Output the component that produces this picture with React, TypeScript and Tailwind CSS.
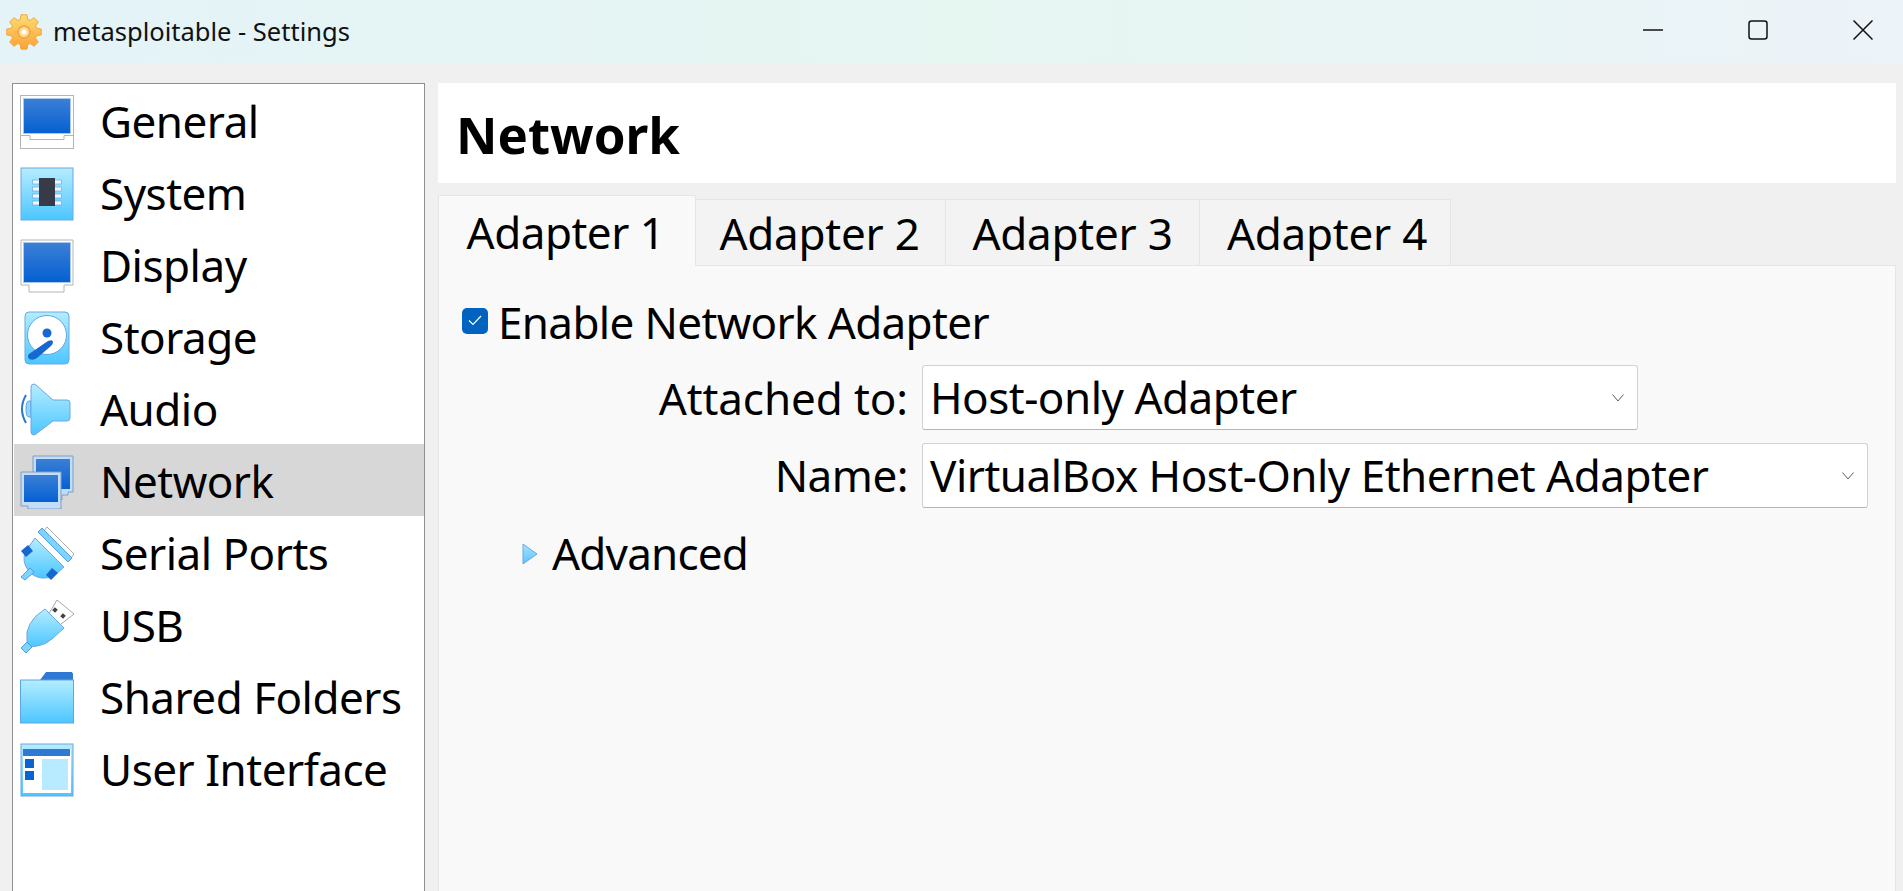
import type { ReactNode } from "react";

const FONT = "font-['Noto_Sans',sans-serif]";

// 8 tooth cog outline, centred on 18,18
function gearPath() {
  const pts: string[] = [];
  for (let i = 0; i < 8; i++) {
    const a = (i * Math.PI) / 4 - Math.PI / 2;
    const corners: [number, number][] = [
      [13, -0.3],
      [17.5, -0.17],
      [17.5, 0.17],
      [13, 0.3],
    ];
    for (const [r, d] of corners) {
      pts.push(`${(18 + r * Math.cos(a + d)).toFixed(2)} ${(18 + r * Math.sin(a + d)).toFixed(2)}`);
    }
  }
  return `M${pts.join("L")}Z`;
}

function Defs() {
  return (
    <svg width="0" height="0" className="absolute">
      <defs>
        <linearGradient id="lightBlue" x1="0" y1="0" x2="0" y2="1">
          <stop offset="0" stopColor="#b5edff" />
          <stop offset="1" stopColor="#4cc6ff" />
        </linearGradient>
        <linearGradient id="deepBlue" x1="0" y1="0" x2="0" y2="1">
          <stop offset="0" stopColor="#3c7fd6" />
          <stop offset="1" stopColor="#0460d2" />
        </linearGradient>
        <linearGradient id="gear" x1="0" y1="0" x2="0" y2="1">
          <stop offset="0" stopColor="#ffdc70" />
          <stop offset="1" stopColor="#fba236" />
        </linearGradient>
      </defs>
    </svg>
  );
}

function Icon({ children }: { children: ReactNode }) {
  return (
    <svg width="54" height="54" viewBox="0 0 54 54" className="shrink-0">
      {children}
    </svg>
  );
}

const GeneralIcon = () => (
  <Icon>
    <rect x="0.5" y="0.5" width="53" height="53" fill="#fff" stroke="#b4b4b4" />
    <rect x="3.5" y="3.5" width="47" height="35" fill="url(#deepBlue)" stroke="#a8c8ee" />
    <path d="M0 40.500h10v4h34v-4h10" fill="none" stroke="#b4b4b4" />
  </Icon>
);

const SystemIcon = () => (
  <Icon>
    <rect x="1" y="1" width="52" height="52" fill="url(#lightBlue)" stroke="#6da7e4" />
    {[13, 20, 27, 34].map((y) => (
      <rect key={y} x="12.5" y={y} width="29" height="4" fill="#eef8ff" stroke="#6da7e4" strokeWidth="0.7" />
    ))}
    <rect x="19" y="11" width="16" height="28" fill="#363b47" />
  </Icon>
);

const DisplayIcon = () => (
  <Icon>
    <path d="M1 1h52v45H44v7H9v-7H1z" fill="#fff" stroke="#b4b4b4" />
    <rect x="3.5" y="3.5" width="47" height="40" fill="url(#deepBlue)" stroke="#a8c8ee" />
  </Icon>
);

const StorageIcon = () => (
  <Icon>
    <rect x="5" y="1" width="44" height="52" rx="4" fill="url(#lightBlue)" stroke="#6da7e4" />
    <circle cx="27" cy="24" r="19.5" fill="#fff" stroke="#5aa7e8" />
    <circle cx="27" cy="22" r="4.5" fill="#1667cf" />
    <path d="M9 48q-2-3 0-5L28 30q5-2 5 1 0 2-2 4L17 47q-4 3-8 1z" fill="#1667cf" />
  </Icon>
);

const AudioIcon = () => (
  <Icon>
    <path d="M6 12q-8 14 0 28" fill="none" stroke="#2a78d6" strokeWidth="2" />
    <path d="M11 18h-2q-3 0-3 8t3 8h2z" fill="#8ed8ff" stroke="#5ea5e6" />
    <path d="M11 4q0-3 3-3l2 1 17 15h14q3 0 3 3v15q0 3-3 3H33L16 51l-2 1q-3 0-3-3z" fill="url(#lightBlue)" stroke="#6da7e4" />
  </Icon>
);

const NetworkIcon = () => (
  <Icon>
    <path d="M13 1h40v36h-5v3h-6v5H13z" fill="#c2ddf5" stroke="#7d9fc9" />
    <rect x="16" y="4" width="34" height="30" fill="url(#deepBlue)" />
    <path d="M1 17h40v37H8v-3H1z" fill="#c2ddf5" stroke="#7d9fc9" />
    <rect x="4" y="20" width="34" height="27" fill="url(#deepBlue)" />
  </Icon>
);

const SerialIcon = () => (
  <Icon>
    <path d="M27 0l27 27-3 4L24 4z" fill="#fff" stroke="#a8a8a8" />
    <path d="M22 1l30 30-4 4-30-30z" fill="#7fd3ff" stroke="#4f9be6" />
    <path d="M15 11l29 29-8 7q-6 5-14 4-9-1-14-8-6-8-3-18z" fill="url(#lightBlue)" stroke="#6da7e4" />
    <path d="M1 24l7-6 5 6-7 6z" fill="#1667cf" />
    <path d="M26 48l6-7 6 5-7 7z" fill="#1667cf" />
    <path d="M1 50l9-9 4 4-9 8z" fill="#7fd3ff" stroke="#4f9be6" />
  </Icon>
);

const UsbIcon = () => (
  <Icon>
    <path d="M27 18L37 1l17 14-18 14z" fill="#fff" stroke="#a8a8a8" />
    <rect x="33" y="9" width="4" height="4" fill="#444" transform="rotate(42 35 11)" />
    <rect x="41" y="15" width="4" height="4" fill="#444" transform="rotate(42 43 17)" />
    <path d="M7 33q2-9 9-16l9-7 19 19-12 11q-7 6-15 7l-7 1-3-3z" fill="url(#lightBlue)" stroke="#6da7e4" />
    <path d="M1 49l6-6 5 5-6 6z" fill="#7fd3ff" stroke="#4f9be6" />
  </Icon>
);

const FolderIcon = () => (
  <Icon>
    <path d="M20 9l6-8h26l1 2v6z" fill="#2f78d4" />
    <rect x="0.5" y="9" width="53" height="43" fill="url(#lightBlue)" stroke="#5ea5e6" />
  </Icon>
);

const InterfaceIcon = () => (
  <Icon>
    <rect x="1" y="1" width="52" height="52" fill="url(#lightBlue)" stroke="#6da7e4" />
    <rect x="3" y="6" width="48" height="44" fill="#fff" />
    <rect x="3" y="6" width="47" height="7" fill="#2f78d4" />
    <rect x="5" y="16" width="9" height="9" fill="#0a64d0" />
    <rect x="5" y="28" width="9" height="9" fill="#0a64d0" />
    <rect x="22" y="16" width="26" height="31" fill="#b8ebff" />
  </Icon>
);

const sections = [
  { label: "General", icon: <GeneralIcon /> },
  { label: "System", icon: <SystemIcon /> },
  { label: "Display", icon: <DisplayIcon /> },
  { label: "Storage", icon: <StorageIcon /> },
  { label: "Audio", icon: <AudioIcon /> },
  { label: "Network", icon: <NetworkIcon />, selected: true },
  { label: "Serial Ports", icon: <SerialIcon /> },
  { label: "USB", icon: <UsbIcon /> },
  { label: "Shared Folders", icon: <FolderIcon /> },
  { label: "User Interface", icon: <InterfaceIcon /> },
];

const tabs = [
  { label: "Adapter 2", width: "w-[250px] pr-[2px]" },
  { label: "Adapter 3", width: "w-[254px]" },
  { label: "Adapter 4", width: "w-[251px] pl-[4px]" },
];

function TitleBar() {
  return (
    <div className="flex h-[63px] shrink-0 items-center bg-gradient-to-r from-[#e4f3f8] via-[#e6f6f1] to-[#ecf3f9] pl-[6px]">
      <svg width="36" height="36" viewBox="0 0 36 36">
        <path d={gearPath()} fill="url(#gear)" stroke="#f4a640" strokeLinejoin="round" />
        <circle cx="18" cy="18" r="6" fill="#ffd98a" stroke="#e9a54a" strokeWidth="1.5" />
        <circle cx="18" cy="18" r="2.5" fill="#fff" />
      </svg>
      <span className="ml-[11px] text-[25.5px] text-[#111]">metasploitable - Settings</span>
      <div className="ml-auto -mt-[3px] flex items-center gap-[85px] pr-[30px]">
        <svg width="20" height="20" viewBox="0 0 20 20">
          <path d="M0 10h20" stroke="#111" strokeWidth="1.500" />
        </svg>
        <svg width="20" height="20" viewBox="0 0 20 20">
          <rect x="1" y="1" width="18" height="18" rx="2.500" fill="none" stroke="#111" strokeWidth="1.500" />
        </svg>
        <svg width="20" height="20" viewBox="0 0 20 20">
          <path d="M0.500 0.500l19 19M19.500 0.500l-19 19" stroke="#111" strokeWidth="1.500" />
        </svg>
      </div>
    </div>
  );
}

function Sidebar() {
  return (
    <div className="h-full w-[413px] shrink-0 border border-b-0 border-[#8e8e94] bg-white pl-px">
      {sections.map((s) => (
        <div
          key={s.label}
          className={`flex h-[72px] items-start pl-[6px] pt-[11px] ${s.selected ? "bg-[#d7d7d7]" : ""}`}
        >
          {s.icon}
          <span className="ml-[26px] -mt-[4px] text-[44px] leading-[61px] tracking-[-0.5px] whitespace-nowrap text-black">
            {s.label}
          </span>
        </div>
      ))}
    </div>
  );
}

function Combo({ value, width }: { value: string; width: string }) {
  return (
    <div
      className={`flex h-[65px] ${width} items-center justify-between rounded-[3px] border border-[#d2d2d2] border-b-[#b4b4b4] bg-white pl-[7px] pr-[13px]`}
    >
      <span className="text-[44px] leading-[61px] tracking-[-0.5px] whitespace-nowrap">{value}</span>
      <svg width="12" height="8" viewBox="0 0 12 8">
        <path d="M0.500 0.500L6 7l5.500-6.500" fill="none" stroke="#5f5f5f" />
      </svg>
    </div>
  );
}

function Panel() {
  return (
    <div className="flex min-w-0 flex-1 flex-col pr-[7px]">
      <div className="flex h-[100px] shrink-0 items-center bg-white pl-[18px] pt-[2px] text-[51px] font-bold text-black">
        Network
      </div>
      <div className="relative mt-[12px] flex h-[70px] shrink-0 items-end">
        <div className="relative z-10 -mb-px flex h-[71px] w-[258px] items-center justify-center rounded-t-[2px] border border-b-0 border-[#e5e5e5] bg-[#f9f9f9] pr-[3px] pt-[2px] text-[44px] tracking-[-0.5px]">
          Adapter 1
        </div>
        {tabs.map((t) => (
          <div
            key={t.label}
            className={`flex h-[66px] ${t.width} items-center justify-center border-t border-r border-[#e5e5e5] bg-[#f3f3f3] text-[44px] tracking-[-0.25px]`}
          >
            {t.label}
          </div>
        ))}
      </div>
      <div className="flex-1 border border-b-0 border-[#e5e5e5] bg-[#f9f9f9] pl-[23px] pt-[27px]">
        <div className="flex h-[61px] items-center">
          <div className="-mt-[6px] flex h-[26px] w-[26px] items-center justify-center rounded-[5px] bg-[#0163c0]">
            <svg width="14" height="11" viewBox="0 0 14 11">
              <path d="M1 5.500L5 9.500 13 1" fill="none" stroke="#fff" strokeWidth="1.200" />
            </svg>
          </div>
          <span className="ml-[10px] -mt-[2px] text-[44px] leading-[61px] tracking-[-0.65px] whitespace-nowrap">
            Enable Network Adapter
          </span>
        </div>
        <div className="mt-[11px] flex items-center">
          <span className="w-[446px] pt-[2px] text-right text-[44px] leading-[61px] tracking-[-0.1px]">Attached to:</span>
          <div className="ml-[14px]">
            <Combo value="Host-only Adapter" width="w-[716px]" />
          </div>
        </div>
        <div className="mt-[13px] flex items-center">
          <span className="w-[446px] text-right text-[44px] leading-[61px] tracking-[-0.5px]">Name:</span>
          <div className="ml-[14px]">
            <Combo value="VirtualBox Host-Only Ethernet Adapter" width="w-[946px]" />
          </div>
        </div>
        <div className="mt-[15px] flex h-[61px] items-center pl-[60px]">
          <svg width="16" height="22" viewBox="0 0 16 22" className="shrink-0">
            <defs>
              <linearGradient id="arrowFill" x1="0" y1="0" x2="0" y2="1">
                <stop offset="0" stopColor="#a9e4ff" />
                <stop offset="1" stopColor="#58c3ff" />
              </linearGradient>
            </defs>
            <path d="M1 1l14 10L1 21z" fill="url(#arrowFill)" stroke="#6da7e4" strokeLinejoin="round" />
          </svg>
          <span className="ml-[14px] text-[44px] leading-[61px] tracking-[-0.8px]">Advanced</span>
        </div>
      </div>
    </div>
  );
}

export default function App() {
  return (
    <div className={`flex h-[891px] w-full flex-col overflow-hidden bg-[#f0f0f0] text-black ${FONT}`}>
      <Defs />
      <TitleBar />
      <div className="flex min-h-0 flex-1 gap-[13px] pl-[12px] pt-[20px]">
        <Sidebar />
        <Panel />
      </div>
    </div>
  );
}
